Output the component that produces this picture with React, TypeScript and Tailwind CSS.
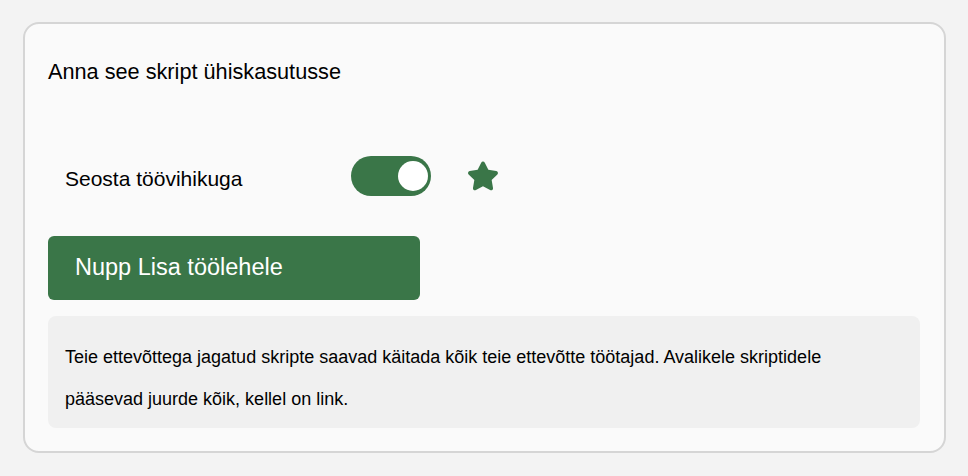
export default function App() {
  return (
    <div className="w-[968px] h-[476px] bg-[#f3f3f3] pt-[22px] pl-[23px] font-['Liberation_Sans',Arial,sans-serif] text-black">
      <div className="w-[923px] h-[431px] rounded-[16px] border-2 border-[#d5d5d5] bg-[#fafafa] pl-[23px] pt-[36px]">
        <h1 className="text-[21.7px] leading-[24px]">Anna see skript ühiskasutusse</h1>

        <div className="mt-[72px] flex h-[40px] items-center pl-[17px]">
          <span className="w-[286px] text-[21px] leading-[24px] pt-[6px]">Seosta töövihikuga</span>
          <button className="flex h-[40px] w-[80px] items-center justify-end rounded-full bg-[#3a7648] pr-[3px]">
            <span className="h-[30px] w-[30px] rounded-full bg-white" />
          </button>
          <svg className="ml-[34px]" width="36" height="36" viewBox="0 0 24 24" fill="#3a7648">
            <path d="M10.788 3.103c.495-1.004 1.926-1.004 2.421 0l2.358 4.777 5.273.766c1.107.161 1.549 1.522.748 2.303l-3.816 3.72.901 5.25c.19 1.103-.968 1.944-1.959 1.424l-4.716-2.48-4.715 2.48c-.99.52-2.148-.32-1.96-1.424l.901-5.25-3.815-3.72c-.801-.78-.359-2.142.748-2.303L8.43 7.88l2.358-4.777Z" />
          </svg>
        </div>

        <button className="mt-[40px] flex h-[64px] w-[372px] items-center rounded-[6px] bg-[#3a7648] pl-[27px] text-[23.5px] text-white">
          Nupp Lisa töölehele
        </button>

        <div className="mt-[16px] h-[112px] w-[872px] rounded-[8px] bg-[#f0f0f0] pl-[17px] pt-[20px] text-[18px] leading-[42px]">
          Teie ettevõttega jagatud skripte saavad käitada kõik teie ettevõtte töötajad. Avalikele skriptidele
          <br />
          pääsevad juurde kõik, kellel on link.
        </div>
      </div>
    </div>
  );
}
